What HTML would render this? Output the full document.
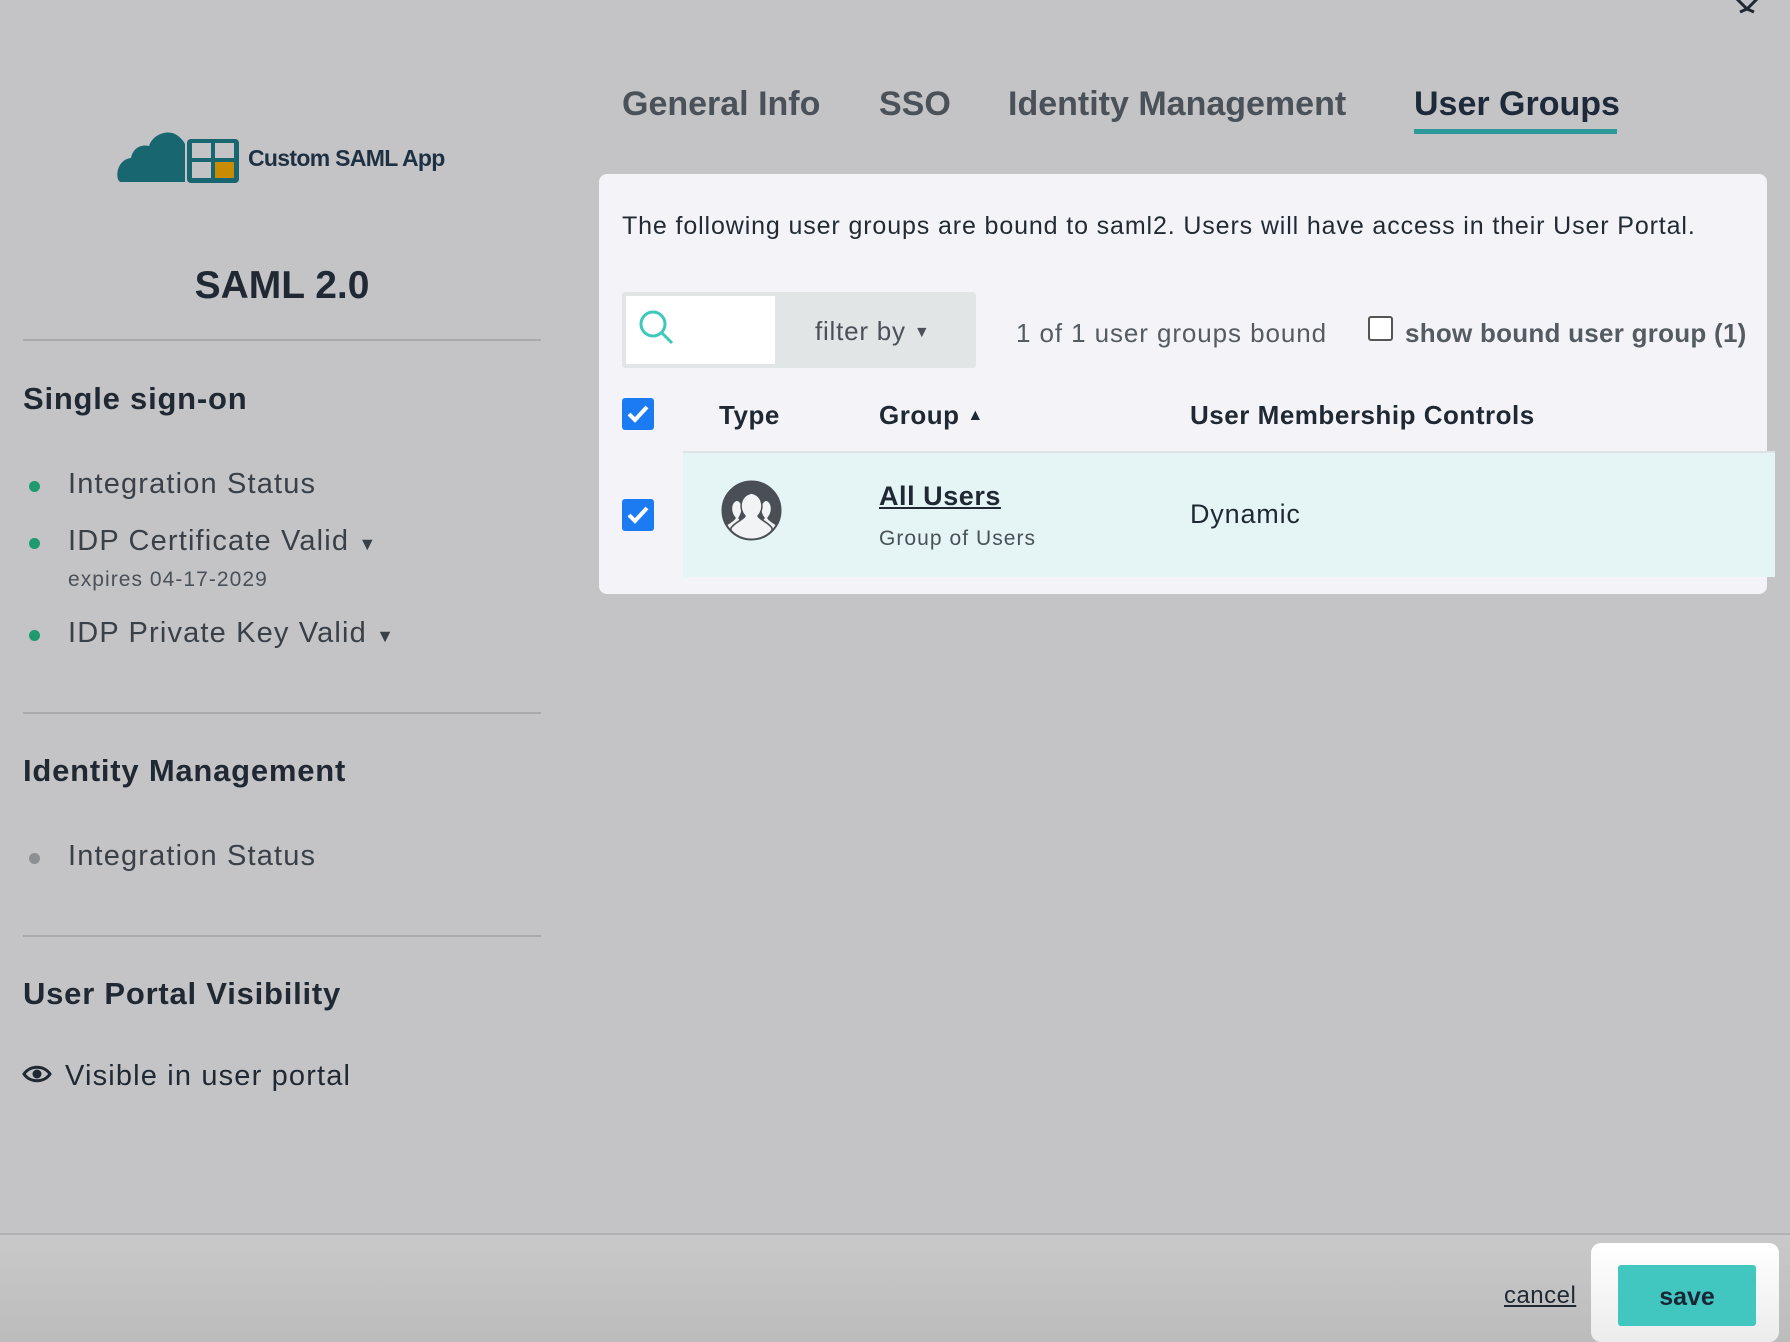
<!DOCTYPE html>
<html><head><meta charset="utf-8"><style>
*{margin:0;padding:0;box-sizing:border-box}
body{width:1790px;height:1342px;background:#c4c4c6;font-family:"Liberation Sans",sans-serif;color:#1f2833;position:relative;overflow:hidden}
.a{position:absolute;white-space:nowrap}
.tab{font-size:34px;font-weight:bold;color:#4b5159;top:85px}
.hr{position:absolute;left:23px;width:518px;height:2px;background:#a9aaad}
.h{font-size:31px;font-weight:bold;color:#1f2833;letter-spacing:0.025em}
.li{font-size:29px;color:#3a4048;letter-spacing:0.04em}
.dot{position:absolute;width:11px;height:11px;border-radius:50%;background:#1f9a6e}
.cb{position:absolute;width:32px;height:32px;background:#1a7bf2;border-radius:3px}
.cb svg{position:absolute;left:5px;top:6px}
</style></head><body>
<svg class="a" style="left:1720px;top:0" width="50" height="14"><path d="M10 -8 L27 9 M44 -8 L27 9 M27 9 L34 12 M27 9 L20 12" stroke="#1f2833" stroke-width="3" fill="none"/></svg>

<div class="a tab" style="left:622px">General Info</div>
<div class="a tab" style="left:879px">SSO</div>
<div class="a tab" style="left:1008px">Identity Management</div>
<div class="a tab" style="left:1414px;color:#1e2a3a">User Groups</div>
<div class="a" style="left:1414px;top:129px;width:203px;height:5px;background:#2b9a98"></div>

<svg class="a" style="left:117px;top:130px" width="125" height="54">
<path d="M4 52 C-2 52 -2 30 14 28 C16 18 24 14 32 16 C36 4 50 0 58 4 C62 6 66 10 68 14 L68 52 Z" fill="#186670"/>
<rect x="70" y="9" width="52" height="44" rx="4" fill="#186670"/>
<rect x="75" y="13" width="19" height="15" fill="#c4c4c6"/><rect x="98" y="13" width="19" height="15" fill="#c4c4c6"/>
<rect x="75" y="32" width="19" height="16" fill="#c4c4c6"/><rect x="98" y="32" width="19" height="16" fill="#c88c00"/>
</svg>
<div class="a" style="left:248px;top:145px;font-size:23px;color:#1e3142;font-weight:bold;letter-spacing:-0.03em">Custom SAML App</div>

<div class="a" style="left:0;width:564px;text-align:center;top:264px;font-size:39px;font-weight:bold">SAML 2.0</div>
<div class="hr" style="top:339px"></div>
<div class="a h" style="left:23px;top:381px">Single sign-on</div>
<div class="dot" style="left:29px;top:481px"></div><div class="a li" style="left:68px;top:468px">Integration Status</div>
<div class="dot" style="left:29px;top:538px"></div><div class="a li" style="left:68px;top:525px">IDP Certificate Valid <span style="font-size:18px">▼</span></div>
<div class="a" style="left:68px;top:568px;font-size:21px;color:#4a5058;letter-spacing:0.05em">expires 04-17-2029</div>
<div class="dot" style="left:29px;top:630px"></div><div class="a li" style="left:68px;top:617px">IDP Private Key Valid <span style="font-size:18px">▼</span></div>
<div class="hr" style="top:712px"></div>
<div class="a h" style="left:23px;top:753px">Identity Management</div>
<div class="dot" style="left:29px;top:853px;background:#8d8f93"></div><div class="a li" style="left:68px;top:840px">Integration Status</div>
<div class="hr" style="top:935px"></div>
<div class="a h" style="left:23px;top:976px">User Portal Visibility</div>
<svg class="a" style="left:22px;top:1063px" width="30" height="22"><path d="M2 11 C8 2 22 2 28 11 C22 20 8 20 2 11 Z" fill="none" stroke="#1f2833" stroke-width="3"/><circle cx="15" cy="11" r="4.5" fill="#1f2833"/></svg>
<div class="a li" style="left:65px;top:1060px;color:#1f2833">Visible in user portal</div>

<div class="a" style="left:599px;top:174px;width:1168px;height:420px;background:#f4f4f8;border-radius:8px"></div>
<div class="a" style="left:622px;top:212px;font-size:25px;color:#222a33;letter-spacing:0.035em">The following user groups are bound to saml2. Users will have access in their User Portal.</div>
<div class="a" style="left:622px;top:292px;width:354px;height:76px;background:#e1e5e6;border-radius:3px"></div>
<div class="a" style="left:626px;top:296px;width:149px;height:68px;background:#fff"></div>
<svg class="a" style="left:638px;top:309px" width="38" height="38"><circle cx="15" cy="15" r="12" fill="none" stroke="#3ec7bd" stroke-width="3"/><path d="M24 24 L34 34" stroke="#3ec7bd" stroke-width="3"/></svg>
<div class="a" style="left:815px;top:316px;font-size:26px;color:#4b5159;letter-spacing:0.03em">filter by <span style="font-size:16px;vertical-align:3px">▼</span></div>
<div class="a" style="left:1016px;top:318px;font-size:26px;color:#555b62;letter-spacing:0.035em">1 of 1 user groups bound</div>
<div class="a" style="left:1368px;top:316px;width:25px;height:25px;border:2px solid #555;border-radius:3px;background:#fff"></div>
<div class="a" style="left:1405px;top:318px;font-size:26px;color:#555b62;font-weight:bold;letter-spacing:0.01em">show bound user group (1)</div>

<div class="cb" style="left:622px;top:398px"><svg width="22" height="20"><path d="M2 10 L8 16 L20 3" stroke="#fff" stroke-width="4" fill="none"/></svg></div>
<div class="a" style="left:719px;top:400px;font-size:26px;font-weight:bold;letter-spacing:0.02em">Type</div>
<div class="a" style="left:879px;top:400px;font-size:26px;font-weight:bold;letter-spacing:0.02em">Group <span style="font-size:16px;vertical-align:4px">▲</span></div>
<div class="a" style="left:1190px;top:400px;font-size:26px;font-weight:bold;letter-spacing:0.02em">User Membership Controls</div>

<div class="a" style="left:683px;top:451px;width:1092px;height:126px;background:#e5f5f5;border-top:2px solid #dde4e6"></div>
<div class="cb" style="left:622px;top:499px"><svg width="22" height="20"><path d="M2 10 L8 16 L20 3" stroke="#fff" stroke-width="4" fill="none"/></svg></div>
<svg class="a" style="left:721px;top:480px" width="61" height="61">
<defs><clipPath id="c"><circle cx="30.5" cy="30.5" r="29"/></clipPath></defs>
<circle cx="30.5" cy="30.5" r="29" fill="#f1f3f4"/>
<g clip-path="url(#c)"><rect width="61" height="61" fill="#4a4f55"/>
<path d="M0 61 L0 50 C4 44 12 42 14 38 C9 32 9 22 16 20 C23 22 22 32 18 38 C20 42 28 44 30 50 L30 61 Z M31 61 L31 50 C33 44 41 42 43 38 C38 32 39 22 45 20 C52 22 52 32 47 38 C49 42 57 44 61 50 L61 61 Z" fill="#f1f3f4" stroke="#4a4f55" stroke-width="1.5"/>
<path d="M10 61 L10 48 C14 42 22 40 24 36 C18 30 18 16 30.5 13 C43 16 43 30 37 36 C39 40 47 42 51 48 L51 61 Z" fill="#f1f3f4" stroke="#4a4f55" stroke-width="1.5"/></g>
<circle cx="30.5" cy="30.5" r="29" fill="none" stroke="#4a4f55" stroke-width="2"/>
</svg>
<div class="a" style="left:879px;top:481px;font-size:27px;font-weight:bold;text-decoration:underline;letter-spacing:0.02em">All Users</div>
<div class="a" style="left:879px;top:527px;font-size:21px;color:#4a5058;letter-spacing:0.05em">Group of Users</div>
<div class="a" style="left:1190px;top:499px;font-size:27px;letter-spacing:0.03em">Dynamic</div>

<div class="a" style="left:0;top:1233px;width:1790px;height:109px;background:linear-gradient(#c9c9ca,#bcbcbd);border-top:2px solid #b2b3b5"></div>
<div class="a" style="left:1504px;top:1282px;font-size:24px;text-decoration:underline;letter-spacing:0.02em">cancel</div>
<div class="a" style="left:1591px;top:1243px;width:188px;height:99px;background:linear-gradient(#fff,#ececec);border-radius:10px"></div>
<div class="a" style="left:1618px;top:1265px;width:138px;height:61px;background:#41c6c0;border-radius:3px;text-align:center;line-height:64px;font-size:25px;font-weight:bold;color:#1a2635">save</div>
</body></html>
